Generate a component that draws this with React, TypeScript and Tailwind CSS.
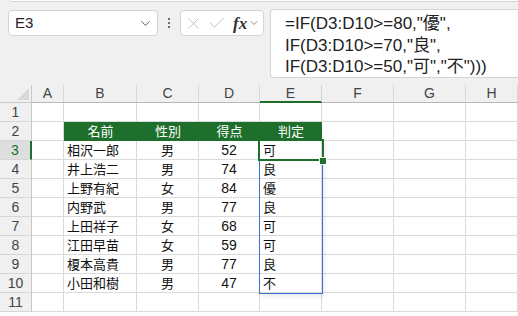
import { ChevronDown, X, Check } from 'lucide-react';

const cols = ['A', 'B', 'C', 'D', 'E', 'F', 'G', 'H'];

const rows = [
  { name: '相沢一郎', sex: '男', score: 52, grade: '可' },
  { name: '井上浩二', sex: '男', score: 74, grade: '良' },
  { name: '上野有紀', sex: '女', score: 84, grade: '優' },
  { name: '内野武', sex: '男', score: 77, grade: '良' },
  { name: '上田祥子', sex: '女', score: 68, grade: '可' },
  { name: '江田早苗', sex: '女', score: 59, grade: '可' },
  { name: '榎本高貴', sex: '男', score: 77, grade: '良' },
  { name: '小田和樹', sex: '男', score: 47, grade: '不' },
];

const cjk = "font-['Noto_Sans_CJK_JP',sans-serif]";
const ui = "font-['Liberation_Sans','Noto_Sans_CJK_JP',sans-serif]";
const cell = 'border-r border-b border-[#dadada] flex items-center text-[13px] text-[#111] overflow-hidden whitespace-nowrap';

function Toolbar() {
  return (
    <div className="relative h-[85px] bg-[#f0f0f0]">
      <div className="ml-[10px] h-[2px] bg-white border-b border-[#d6d6d6] rounded-bl-[4px]" />
      <div className="flex items-start pt-[8px] pl-[8px]">
        <div className="w-[150px] h-[26px] bg-white border border-[#d4d4d4] rounded-[4px] flex items-center pl-[6px] pr-[4px]">
          <span className={`${ui} text-[15px] text-[#222] flex-1`}>E3</span>
          <ChevronDown size={15} strokeWidth={1.5} className="text-[#555]" />
        </div>
        <div className="w-[22px] h-[26px] flex flex-col items-center justify-center gap-[2px]">
          <span className="w-[2px] h-[2px] bg-[#444] rounded-full" />
          <span className="w-[2px] h-[2px] bg-[#444] rounded-full" />
          <span className="w-[2px] h-[2px] bg-[#444] rounded-full" />
        </div>
        <div className="w-[84px] h-[26px] bg-white border border-[#d4d4d4] rounded-[4px] flex items-center pl-[3px] gap-[4px]">
          <X size={19} strokeWidth={1} className="text-[#b4b4b4]" />
          <Check size={20} strokeWidth={1} className="text-[#b4b4b4]" />
          <span className="flex items-center ml-[2px]">
            <span className="font-['Liberation_Serif',serif] italic font-bold text-[17px] text-[#333] leading-none">fx</span>
            <ChevronDown size={12} strokeWidth={1.5} className="text-[#666] ml-[1px]" />
          </span>
        </div>
        <div className="ml-[6px] flex-1 h-[69px] -mt-[1px] bg-white border border-[#d4d4d4] border-r-0 rounded-l-[4px] pl-[14px] pt-[3px]">
          <div className={`${ui} text-[17px] leading-[21.5px] text-[#222]`}>
            <div>=IF(D3:D10&gt;=80,"優",</div>
            <div>IF(D3:D10&gt;=70,"良",</div>
            <div>IF(D3:D10&gt;=50,"可","不")))</div>
          </div>
        </div>
      </div>
    </div>
  );
}

function Sheet() {
  const hdr = `${ui} text-[14px] text-[#444] bg-[#f0f0f0] border-r border-b flex items-center justify-center`;
  return (
    <div className="relative grid grid-cols-[32px_32px_73px_62px_61px_62px_72px_72px_1fr] grid-rows-[18px_repeat(11,19px)] bg-white">
      <div className="bg-[#f0f0f0] border-r border-b border-[#c8c8c8] relative overflow-hidden">
        <div className="absolute right-[2px] bottom-[2px] w-0 h-0 border-l-[12px] border-l-transparent border-b-[12px] border-b-[#d8d8d8]" />
      </div>
      {cols.map((c) =>
        c === 'E' ? (
          <div key={c} className={`${hdr} bg-[#dedede] text-[#1e6e2c] border-r-[#d0d0d0] border-b-2 border-b-[#1e6e2c]`}>{c}</div>
        ) : (
          <div key={c} className={`${hdr} border-r-[#d6d6d6] border-b-[#b8b8b8]`}>{c}</div>
        )
      )}

      {Array.from({ length: 11 }, (_, i) => {
        const r = i + 1;
        const data = r >= 3 && r <= 10 ? rows[r - 3] : null;
        const isHead = r === 2;
        return [
          r === 3 ? (
            <div key={`h${r}`} className={`${ui} text-[14px] text-[#1e6e2c] bg-[#dedede] border-r-2 border-r-[#1e6e2c] border-b border-b-[#d6d6d6] flex items-center justify-center`}>{r}</div>
          ) : (
            <div key={`h${r}`} className={`${ui} text-[14px] text-[#444] bg-[#f0f0f0] border-r border-r-[#c8c8c8] border-b border-b-[#d6d6d6] flex items-center justify-center`}>{r}</div>
          ),
          <div key={`a${r}`} className={cell} />,
          isHead ? (
            <div key={`b${r}`} className={`${cjk} h-full flex items-center justify-center text-[13px] text-white bg-[#1e6e2c] border-b border-[#1e6e2c]`}>名前</div>
          ) : (
            <div key={`b${r}`} className={`${cell} ${cjk} pl-[3px]`}>{data?.name}</div>
          ),
          isHead ? (
            <div key={`c${r}`} className={`${cjk} flex items-center justify-center text-[13px] text-white bg-[#1e6e2c] border-b border-[#1e6e2c]`}>性別</div>
          ) : (
            <div key={`c${r}`} className={`${cell} ${cjk} justify-center`}>{data?.sex}</div>
          ),
          isHead ? (
            <div key={`d${r}`} className={`${cjk} flex items-center justify-center text-[13px] text-white bg-[#1e6e2c] border-b border-[#1e6e2c]`}>得点</div>
          ) : (
            <div key={`d${r}`} className={`${cell} ${ui} text-[14px] justify-center`}>{data?.score}</div>
          ),
          isHead ? (
            <div key={`e${r}`} className={`${cjk} flex items-center justify-center text-[13px] text-white bg-[#1e6e2c] border-b border-[#1e6e2c]`}>判定</div>
          ) : (
            <div key={`e${r}`} className={`${cell} ${cjk} pl-[3px]`}>{data?.grade}</div>
          ),
          <div key={`f${r}`} className={cell} />,
          <div key={`g${r}`} className={cell} />,
          <div key={`i${r}`} className={cell} />,
        ];
      })}

      {/* spill range */}
      <div className="absolute left-[259px] top-[55px] w-[64px] h-[154px] border border-[#3b6fd0] shadow-[2px_3px_4px_rgba(0,0,0,0.08)] pointer-events-none" />
      {/* active cell */}
      <div className="absolute left-[258px] top-[54px] w-[66px] h-[22px] border-2 border-[#1e6e2c] pointer-events-none" />
      <div className="absolute left-[319px] top-[72px] w-[8px] h-[8px] bg-[#1e6e2c] border border-white pointer-events-none" />
    </div>
  );
}

export default function App() {
  return (
    <div className="w-[518px] h-[316px] overflow-hidden bg-white">
      <Toolbar />
      <Sheet />
    </div>
  );
}
